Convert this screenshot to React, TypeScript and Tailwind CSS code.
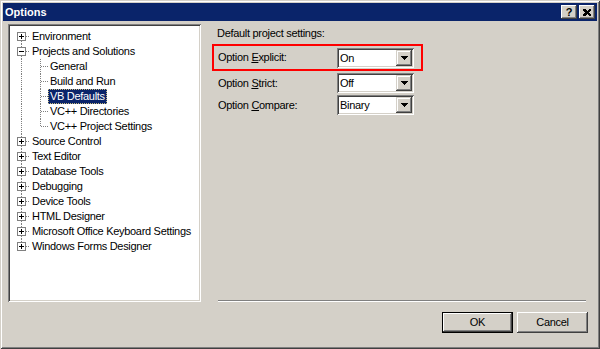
import React from "react";

type Node = {
  label: string;
  level: 0 | 1;
  box?: "plus" | "minus";
  selected?: boolean;
  lastChild?: boolean;
};

const TREE: Node[] = [
  { label: "Environment", level: 0, box: "plus" },
  { label: "Projects and Solutions", level: 0, box: "minus" },
  { label: "General", level: 1 },
  { label: "Build and Run", level: 1 },
  { label: "VB Defaults", level: 1, selected: true },
  { label: "VC++ Directories", level: 1 },
  { label: "VC++ Project Settings", level: 1, lastChild: true },
  { label: "Source Control", level: 0, box: "plus" },
  { label: "Text Editor", level: 0, box: "plus" },
  { label: "Database Tools", level: 0, box: "plus" },
  { label: "Debugging", level: 0, box: "plus" },
  { label: "Device Tools", level: 0, box: "plus" },
  { label: "HTML Designer", level: 0, box: "plus" },
  { label: "Microsoft Office Keyboard Settings", level: 0, box: "plus" },
  { label: "Windows Forms Designer", level: 0, box: "plus" },
];

const DOT = { stroke: "#808080", strokeWidth: 1, strokeDasharray: "1 1" };

function TreeLines({ node, first, last }: { node: Node; first: boolean; last: boolean }) {
  if (node.level === 1) {
    return (
      <svg width={38} height={15} shapeRendering="crispEdges" className="shrink-0">
        <line x1={11.5} y1={0} x2={11.5} y2={15} {...DOT} />
        <line x1={30.5} y1={0} x2={30.5} y2={node.lastChild ? 8 : 15} {...DOT} />
        <line x1={31} y1={7.5} x2={38} y2={7.5} {...DOT} />
      </svg>
    );
  }
  return (
    <svg width={20} height={15} shapeRendering="crispEdges" className="shrink-0">
      {!first && <line x1={11.5} y1={0} x2={11.5} y2={3} {...DOT} />}
      {!last && <line x1={11.5} y1={12} x2={11.5} y2={15} {...DOT} />}
      <line x1={16} y1={7.5} x2={20} y2={7.5} {...DOT} />
      <rect x={7.5} y={3.5} width={8} height={8} fill="#ffffff" stroke="#808080" />
      <line x1={9} y1={7.5} x2={14} y2={7.5} stroke="#000000" />
      {node.box === "plus" && <line x1={11.5} y1={5} x2={11.5} y2={10} stroke="#000000" />}
    </svg>
  );
}

function Combo({ value }: { value: string }) {
  return (
    <div className="w-[77px] h-[20px] bg-white flex items-center p-[2px] shadow-[inset_1px_1px_#808080,inset_-1px_-1px_#ffffff,inset_2px_2px_#404040,inset_-2px_-2px_#d4d0c8]">
      <span className="flex-1 pl-[1px] leading-[16px]">{value}</span>
      <span className="w-[16px] h-[16px] bg-[#d4d0c8] flex items-center justify-center shadow-[inset_-1px_-1px_#404040,inset_1px_1px_#d4d0c8,inset_-2px_-2px_#808080,inset_2px_2px_#ffffff]">
        <svg width={7} height={4} shapeRendering="crispEdges">
          <polygon points="0,0 7,0 3.5,4" fill="#000000" />
        </svg>
      </span>
    </div>
  );
}

function Accel({ pre, key_, post }: { pre: string; key_: string; post: string }) {
  return (
    <span>
      {pre}
      <span className="underline underline-offset-[1px]">{key_}</span>
      {post}
    </span>
  );
}

export default function App() {
  return (
    <div className="w-[600px] h-[349px] bg-[#d4d0c8] flex flex-col text-black text-[11px] tracking-[-0.3px] font-['Liberation_Sans',Arial,sans-serif] shadow-[inset_1px_1px_#d4d0c8,inset_-1px_-1px_#404040,inset_2px_2px_#ffffff,inset_-2px_-2px_#808080] overflow-hidden">
      {/* title bar */}
      <div className="mx-[3px] mt-[3px] h-[18px] bg-[#0a246a] flex items-center pl-[2px] pr-[2px]">
        <span className="flex-1 text-white font-bold text-[11px] tracking-normal">Options</span>
        <div className="flex gap-[2px]">
          <button className="w-[16px] h-[14px] bg-[#d4d0c8] flex items-center justify-center text-[11px] font-bold leading-none shadow-[inset_-1px_-1px_#404040,inset_1px_1px_#ffffff,inset_-2px_-2px_#808080]">
            ?
          </button>
          <button className="w-[16px] h-[14px] bg-[#d4d0c8] flex items-center justify-center shadow-[inset_-1px_-1px_#404040,inset_1px_1px_#ffffff,inset_-2px_-2px_#808080]">
            <svg width={8} height={7} shapeRendering="crispEdges">
              <path d="M0 0h2l2 2 2-2h2v1l-2 2.5 2 2.5v1h-2l-2-2-2 2h-2v-1l2-2.5-2-2.5z" fill="#000000" />
            </svg>
          </button>
        </div>
      </div>

      {/* body */}
      <div className="flex h-[282px]">
        <div className="ml-[8px] mt-[3px] w-[193px] h-[278px] bg-white p-[2px] pt-[5px] pl-[2px] shadow-[inset_1px_1px_#808080,inset_-1px_-1px_#ffffff,inset_2px_2px_#404040,inset_-2px_-2px_#d4d0c8]">
          {TREE.map((node, i) => (
            <div key={node.label} className="flex items-center h-[15px]">
              <TreeLines node={node} first={i === 0} last={i === TREE.length - 1} />
              <span
                className={
                  node.selected
                    ? "h-[15px] px-[1px] leading-[13px] bg-[#0a246a] text-white border border-dotted border-[#c8bb80]"
                    : "px-[2px] leading-[15px] whitespace-nowrap"
                }
              >
                {node.label}
              </span>
            </div>
          ))}
        </div>

        <div className="ml-[11px] mr-[14px] flex-1 flex flex-col pt-[6px]">
          <p className="pl-[5px] leading-[13px]">Default project settings:</p>
          <div className="mt-[4px] w-[211px] h-[27px] border-2 border-[#ff0000] flex items-center pl-[4px]">
            <span className="w-[119px]">
              <Accel pre="Option " key_="E" post="xplicit:" />
            </span>
            <Combo value="On" />
          </div>
          <div className="mt-[2px] pl-[6px] flex items-center h-[20px]">
            <span className="w-[119px]">
              <Accel pre="Option " key_="S" post="trict:" />
            </span>
            <Combo value="Off" />
          </div>
          <div className="mt-[2px] pl-[6px] flex items-center h-[20px]">
            <span className="w-[119px]">
              <Accel pre="Option " key_="C" post="ompare:" />
            </span>
            <Combo value="Binary" />
          </div>
          <div className="mt-auto mb-[1px] ml-[6px] h-[2px] border-t border-[#808080] border-b border-b-white" />
        </div>
      </div>

      {/* buttons */}
      <div className="flex justify-end gap-[4px] pt-[9px] pr-[12px]">
        <button className="w-[71px] h-[21px] bg-[#d4d0c8] border border-black shadow-[inset_-1px_-1px_#404040,inset_1px_1px_#ffffff,inset_-2px_-2px_#808080]">
          OK
        </button>
        <button className="w-[71px] h-[21px] bg-[#d4d0c8] shadow-[inset_-1px_-1px_#404040,inset_1px_1px_#ffffff,inset_-2px_-2px_#808080]">
          Cancel
        </button>
      </div>
    </div>
  );
}
